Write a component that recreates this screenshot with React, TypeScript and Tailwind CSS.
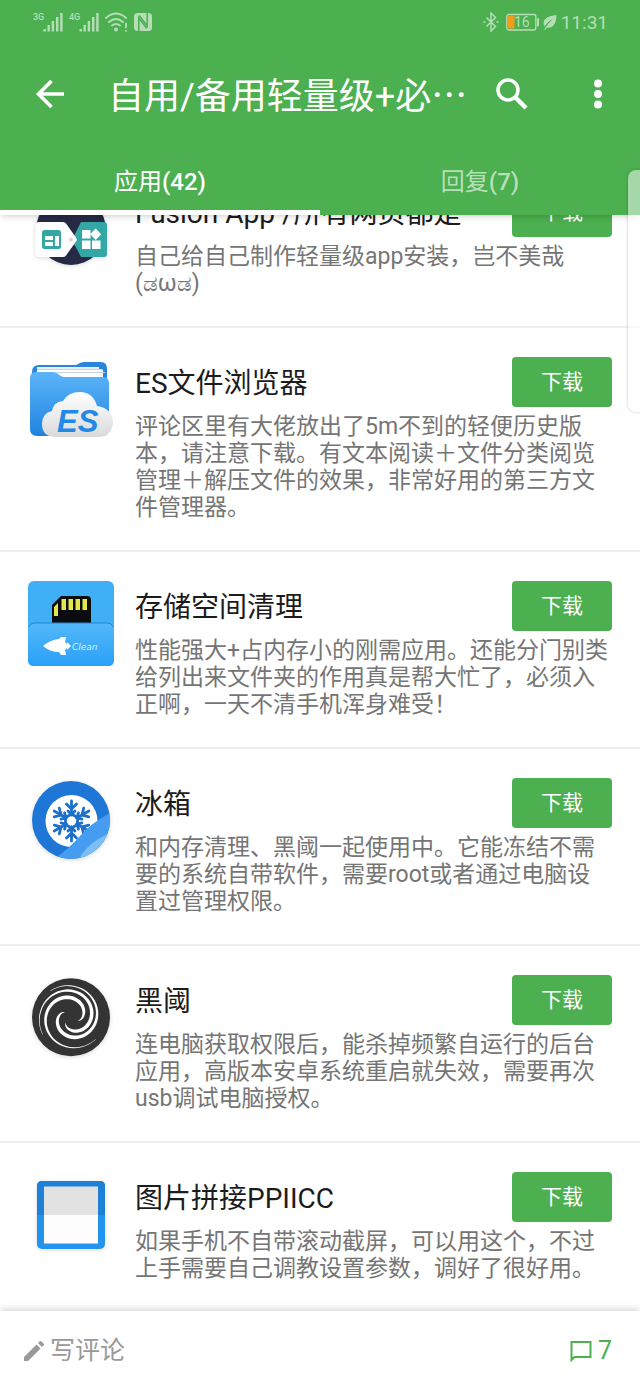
import type { ReactNode } from "react";

type AppItem = {
  name: string;
  description: string;
  icon: ReactNode;
};

function FusionIcon() {
  return (
    <svg viewBox="0 0 86 86" className="size-[86px] drop-shadow-sm">
      <circle cx="43" cy="43" r="35" fill="#272a45" />
      <path d="M53 35h23a3 3 0 0 1 3 3v29a3 3 0 0 1-3 3H53l-9-17z" fill="#33a7a5" />
      <path d="M11 35h24q2 0 3 1.500l10 14q1.500 2 0 4l-10 14q-1 1.500-3 1.500H11q-3.500 0-3.500-3.500v-28Q7.500 35 11 35z" fill="#fff" />
      <circle cx="43" cy="52.500" r="2" fill="#e8cfd0" />
      <rect x="14" y="43" width="19" height="19" rx="2.500" fill="#33a7a5" />
      <path d="M17 49h8v4h-8zM17 55h8v4h-8zM27 49h4v10h-4z" fill="#fff" />
      <path d="M54 43h8.500v8.500H54zM54 53.500h8.500V62H54zM64 53.500h8.500V62H64zM67.700 41.500l5.500 5.700-5.500 5.700-5.500-5.700z" fill="#fff" />
    </svg>
  );
}

function EsIcon() {
  return (
    <svg viewBox="0 0 86 86" className="size-[86px]">
      <defs>
        <linearGradient id="es-folder" x1="0" y1="0" x2="0" y2="1">
          <stop offset="0" stopColor="#5cb5fa" />
          <stop offset="1" stopColor="#1f83de" />
        </linearGradient>
        <linearGradient id="es-cloud" x1="0" y1="0" x2="0" y2="1">
          <stop offset="0" stopColor="#ffffff" />
          <stop offset="1" stopColor="#d9dadc" />
        </linearGradient>
      </defs>
      <path d="M11 8h35q3 0 5-1.500T56 5h17q6 0 6 7v28H4V15q0-7 7-7z" fill="#2a86dc" />
      <path d="M9 10h62v22H9z" fill="#e9f1f8" />
      <path d="M9 12.500h66v20H9z" fill="#fff" />
      <path d="M9 12.500h65M28 15.500h49" stroke="#c3d5e6" strokeWidth="1" />
      <path d="M8 15h17q3 0 5 2l2 1.500q2 1.500 5 1.500h38q6 0 6 6v46q0 7-7 7H9q-7 0-7-7V21q0-6 6-6z" fill="url(#es-folder)" />
      <path d="M26 80Q14 79 14 67q0-11 10-13 1-9 11-10 5-9 17-9 13 0 17 14 15 2 16 16-1 15-15 15z" fill="url(#es-cloud)" />
      <text x="29" y="75" fontFamily="Liberation Sans, sans-serif" fontSize="31" fontWeight="700" fontStyle="italic" fill="#2389e8">
        ES
      </text>
    </svg>
  );
}

function StorageIcon() {
  return (
    <svg viewBox="0 0 86 86" className="size-[86px]">
      <defs>
        <linearGradient id="pocket" x1="0" y1="0" x2="0" y2="1">
          <stop offset="0" stopColor="#52b8f9" />
          <stop offset="1" stopColor="#2ba0f8" />
        </linearGradient>
      </defs>
      <rect width="86" height="85" rx="6" fill="#3fb0f6" />
      <path d="M24 44V24l9-9h26q4 0 4 4v25z" fill="#0b0c10" />
      <path d="M26 26l4-4v13h-4zM33.500 18H38v11h-4.500zM40.500 18H45v11h-4.500zM47.500 18H52v11h-4.500zM54.500 18H59v11h-4.500z" fill="#e4e64a" />
      <path d="M0 47q0-5 5-5h76q5 0 5 5v32q0 6-6 6H6q-6 0-6-6z" fill="url(#pocket)" />
      <path d="M1 46q1-4 5-4h74q4 0 5 4" fill="none" stroke="#2586cc" strokeWidth="1" />
      <path d="M15 65q7-6 16-7l2-2h5l-1 5 2 2v-2l4 4-4 4v-2l-2 2 1 5h-5l-2-3q-9 0-16-6z" fill="#fff" />
      <text x="44" y="69" fontFamily="DejaVu Sans, sans-serif" fontSize="9" fontStyle="italic" fill="#d9efff">
        Clean
      </text>
    </svg>
  );
}

function FridgeIcon() {
  return (
    <svg viewBox="0 0 86 86" className="size-[86px] drop-shadow-sm">
      <defs>
        <clipPath id="fridge-disc">
          <circle cx="43" cy="42" r="39" />
        </clipPath>
      </defs>
      <circle cx="43" cy="42" r="39" fill="#1e76d6" />
      <circle cx="43.500" cy="43" r="26" fill="#fff" />
      <g stroke="#1c6fcb" strokeWidth="2.800" strokeLinecap="round" fill="none">
        {[0, 60, 120, 180, 240, 300].map((angle) => (
          <g key={angle} transform={`rotate(${angle} 43.500 43)`}>
            <path d="M43.500 37V23M38.500 26l5 5 5-5M43.500 36l6 3.500" />
            <path d="M40 33l3.500 3.500L47 33" />
          </g>
        ))}
      </g>
      <g clipPath="url(#fridge-disc)">
        <path d="M24 82Q40 72 52 58T86 33v53H24z" fill="#469cf0" />
        <path d="M50 84Q56 66 86 53v33z" fill="#7dbdf8" />
      </g>
    </svg>
  );
}

// one tapered spiral arm that ends on the rim at the given angle
function spiralArm(endAngle: number) {
  const outer: string[] = [];
  const inner: string[] = [];
  for (let i = 0; i <= 48; i++) {
    const t = i / 48;
    const angle = ((endAngle + (1 - t) * 345) * Math.PI) / 180;
    const radius = 24 + 76 * Math.pow(t, 0.75);
    const half = 0.6 + 5 * Math.pow(Math.sin(Math.PI * Math.pow(t, 0.6)), 1.2);
    const point = (r: number) =>
      `${(129 + r * Math.cos(angle)).toFixed(1)} ${(126 + r * Math.sin(angle)).toFixed(1)}`;
    outer.push(point(radius + half));
    inner.unshift(point(radius - half));
  }
  return `M${outer.concat(inner).join("L")}Z`;
}

function ValveIcon() {
  return (
    <svg viewBox="0 0 258 258" className="size-[86px] drop-shadow-sm">
      <circle cx="129" cy="127" r="117" fill="#343434" />
      <g fill="#fff">
        {[-128, 148, 42].map((angle) => (
          <path key={angle} d={spiralArm(angle)} />
        ))}
      </g>
    </svg>
  );
}

function FrameIcon() {
  return (
    <svg viewBox="0 0 86 86" className="size-[86px] drop-shadow-sm">
      <rect x="9" y="9" width="68" height="68" rx="5" fill="#2394ee" />
      <path d="M14 9h58q5 0 5 5v29H9V14q0-5 5-5z" fill="#1e80d6" />
      <path d="M16 14.500h54V43H16z" fill="#e2e2e2" />
      <path d="M16 43h54v28.500H16z" fill="#fdfdfd" />
    </svg>
  );
}

function Signal({ label }: { label: string }) {
  return (
    <svg viewBox="0 0 31 20" className="h-5 w-[31px]" fill="currentColor">
      <text x="0" y="8" fontFamily="Roboto, sans-serif" fontSize="9" fontWeight="500">
        {label}
      </text>
      <path d="M10.500 17h2.400v2.500h-2.400zM14.500 13h2.400v6.500h-2.400zM18.700 9h2.400v10.500h-2.400zM23 5h2.400v14.500H23zM27.200 1h2.400v18.500h-2.400z" />
    </svg>
  );
}

function StatusBar() {
  return (
    <div className="flex h-11 items-center justify-between pr-8 pl-[33px] text-[#b5deb7]">
      <div className="flex items-center gap-[5px]">
        <Signal label="3G" />
        <Signal label="4G" />
        <svg viewBox="0 0 23 20" className="h-5 w-[23px]" fill="none" stroke="currentColor" strokeWidth="2" strokeLinecap="round">
          <path d="M1 6q10-9 20 0M4 10q7-6 14 0M7 13.500q4-3 8 0" />
          <circle cx="11" cy="17.500" r="1.200" fill="currentColor" stroke="none" />
          <circle cx="11" cy="17.500" r="1" />
          <path d="M21 11.500v4M21 18.800v.1" strokeWidth="1.800" />
        </svg>
        <svg viewBox="0 0 20 20" className="size-5">
          <rect x="1" y="1" width="18" height="18" rx="3.500" fill="currentColor" />
          <path d="M5.800 19.500V6l8 10.500M14.200.5V14L6.200 3.500" fill="none" stroke="#4caf50" strokeWidth="1.500" />
        </svg>
      </div>
      <div className="flex items-center gap-1">
        <svg viewBox="0 0 16 20" className="h-5 w-4" fill="none" stroke="currentColor" strokeWidth="1.500">
          <path d="M3.500 5.500l9 9L8 19V1l4.500 4.500-9 9" />
          <path d="M.5 10h2M13.500 10h2" />
        </svg>
        <svg viewBox="0 0 36 20" className="h-5 w-9">
          <rect x="3.800" y="2.500" width="29" height="15.500" rx="2" fill="none" stroke="currentColor" strokeWidth="1.300" />
          <rect x="5" y="4" width="6.500" height="12.500" fill="#f59a1c" />
          <rect x="34" y="6" width="2" height="8.500" rx="1" fill="currentColor" />
          <text x="11" y="15" fontFamily="Roboto, sans-serif" fontSize="14" fill="currentColor">
            16
          </text>
        </svg>
        <svg viewBox="0 0 14 16" className="h-4 w-3.5" fill="currentColor">
          <path d="M13.500 1Q1 2 .5 9q0 2 1 3.500Q5 7 10 5 5.500 8.500 2 14q-.5 1-.8 1.500l1.200.2 1-2Q13 15 13.500 1z" />
        </svg>
        <span className="font-[Roboto,sans-serif] text-[19px] leading-none">11:31</span>
      </div>
    </div>
  );
}

function AppRow({ item }: { item: AppItem }) {
  return (
    <li className="flex gap-[21px] border-b-2 border-[#efefef] pt-[29px] pr-7 pb-[29px] pl-7">
      <div className="shrink-0">{item.icon}</div>
      <div className="min-w-0 flex-1">
        <div className="flex items-center justify-between">
          <h2 className="truncate pt-1 text-[28px] leading-[46px] text-[#1c1c1c]">{item.name}</h2>
          <button type="button" className="h-[50px] w-[100px] shrink-0 rounded-sm bg-[#4caf50] pt-[2px] text-[21px] text-white">
            下载
          </button>
        </div>
        <p className="mt-[6px] text-[23px] leading-[27px] text-[#757575]">{item.description}</p>
      </div>
    </li>
  );
}

const apps: AppItem[] = [
  {
    name: "Fusion App /所有网页都是",
    description: "自己给自己制作轻量级app安装，岂不美哉(ಡωಡ)",
    icon: <FusionIcon />,
  },
  {
    name: "ES文件浏览器",
    description:
      "评论区里有大佬放出了5m不到的轻便历史版本，请注意下载。有文本阅读＋文件分类阅览管理＋解压文件的效果，非常好用的第三方文件管理器。",
    icon: <EsIcon />,
  },
  {
    name: "存储空间清理",
    description:
      "性能强大+占内存小的刚需应用。还能分门别类给列出来文件夹的作用真是帮大忙了，必须入正啊，一天不清手机浑身难受！",
    icon: <StorageIcon />,
  },
  {
    name: "冰箱",
    description:
      "和内存清理、黑阈一起使用中。它能冻结不需要的系统自带软件，需要root或者通过电脑设置过管理权限。",
    icon: <FridgeIcon />,
  },
  {
    name: "黑阈",
    description:
      "连电脑获取权限后，能杀掉频繁自运行的后台应用，高版本安卓系统重启就失效，需要再次usb调试电脑授权。",
    icon: <ValveIcon />,
  },
  {
    name: "图片拼接PPIICC",
    description: "如果手机不自带滚动截屏，可以用这个，不过上手需要自己调教设置参数，调好了很好用。",
    icon: <FrameIcon />,
  },
];

export default function App() {
  return (
    <div
      lang="zh-CN"
      className="relative flex h-screen flex-col overflow-hidden bg-white font-[Roboto,'Noto_Sans_CJK_SC',sans-serif]"
    >
      <header className="relative z-10 shrink-0 bg-[#4caf50] text-white shadow-md">
        <StatusBar />
        <div className="flex h-[100px] items-center pr-[26px] pl-[34px]">
          <button type="button" aria-label="返回" className="shrink-0">
            <svg viewBox="0 0 32 32" className="size-8" fill="none" stroke="currentColor" strokeWidth="3.600">
              <path d="M30 16H4M17.500 3L4.500 16l13 13" />
            </svg>
          </button>
          <h1 className="ml-[42px] flex-1 truncate pt-[2px] text-[36px] leading-[50px]">
            自用/备用轻量级+必<span className="font-['Noto_Sans_CJK_SC',sans-serif]">…</span>
          </h1>
          <button type="button" aria-label="搜索" className="shrink-0">
            <svg viewBox="0 0 32 32" className="size-8" fill="none" stroke="currentColor">
              <circle cx="12" cy="12" r="10" strokeWidth="3.500" />
              <path d="M19 19l11 11" strokeWidth="4.500" />
            </svg>
          </button>
          <button type="button" aria-label="更多" className="ml-[54px] shrink-0">
            <svg viewBox="0 0 32 32" className="size-8" fill="currentColor">
              <circle cx="16" cy="5.500" r="4" />
              <circle cx="16" cy="16" r="4" />
              <circle cx="16" cy="26.500" r="4" />
            </svg>
          </button>
        </div>
        <div className="grid h-[71px] grid-cols-2 text-2xl">
          <button type="button" className="relative pt-1">
            应用<span className="font-medium">(42)</span>
            <span className="absolute inset-x-0 bottom-0 h-[5px] bg-white" />
          </button>
          <button type="button" className="pt-1 text-[#b7dfb9]">
            回复<span className="font-medium">(7)</span>
          </button>
        </div>
      </header>

      {/* list is scrolled part of the way through its first row */}
      <main className="min-h-0 flex-1 overflow-hidden">
        <ul className="-mt-[57px]">
          {apps.map((item) => (
            <AppRow key={item.name} item={item} />
          ))}
        </ul>
      </main>

      <footer className="relative z-10 flex h-[76px] shrink-0 items-center justify-between bg-white px-6 pt-1 text-[25px] shadow-[0_-1px_8px_rgba(0,0,0,0.2)]">
        <button type="button" className="flex items-center gap-[6px] text-[#999999]">
          <svg viewBox="0 0 20 20" className="size-5" fill="currentColor">
            <path d="M0 16L12.500 3.500l4 4L4 20H0zM14 2l1.500-1.500q1-1 2 0l2 2q1 1 0 2L18 6z" />
          </svg>
          写评论
        </button>
        <button type="button" aria-label="7 条评论" className="mr-1 flex items-center gap-[6px] text-[#4caf50]">
          <svg viewBox="0 0 22 22" className="size-[22px]" fill="none" stroke="currentColor" strokeWidth="2">
            <path d="M1.500 20V2h19v15H4.500z" />
          </svg>
          7
        </button>
      </footer>

      {/* edge panel handle */}
      <div className="absolute top-[170px] right-0 z-20 h-[242px] w-3 rounded-l-lg bg-white/50 shadow-[0_0_3px_rgba(0,0,0,0.25)]" />
    </div>
  );
}
